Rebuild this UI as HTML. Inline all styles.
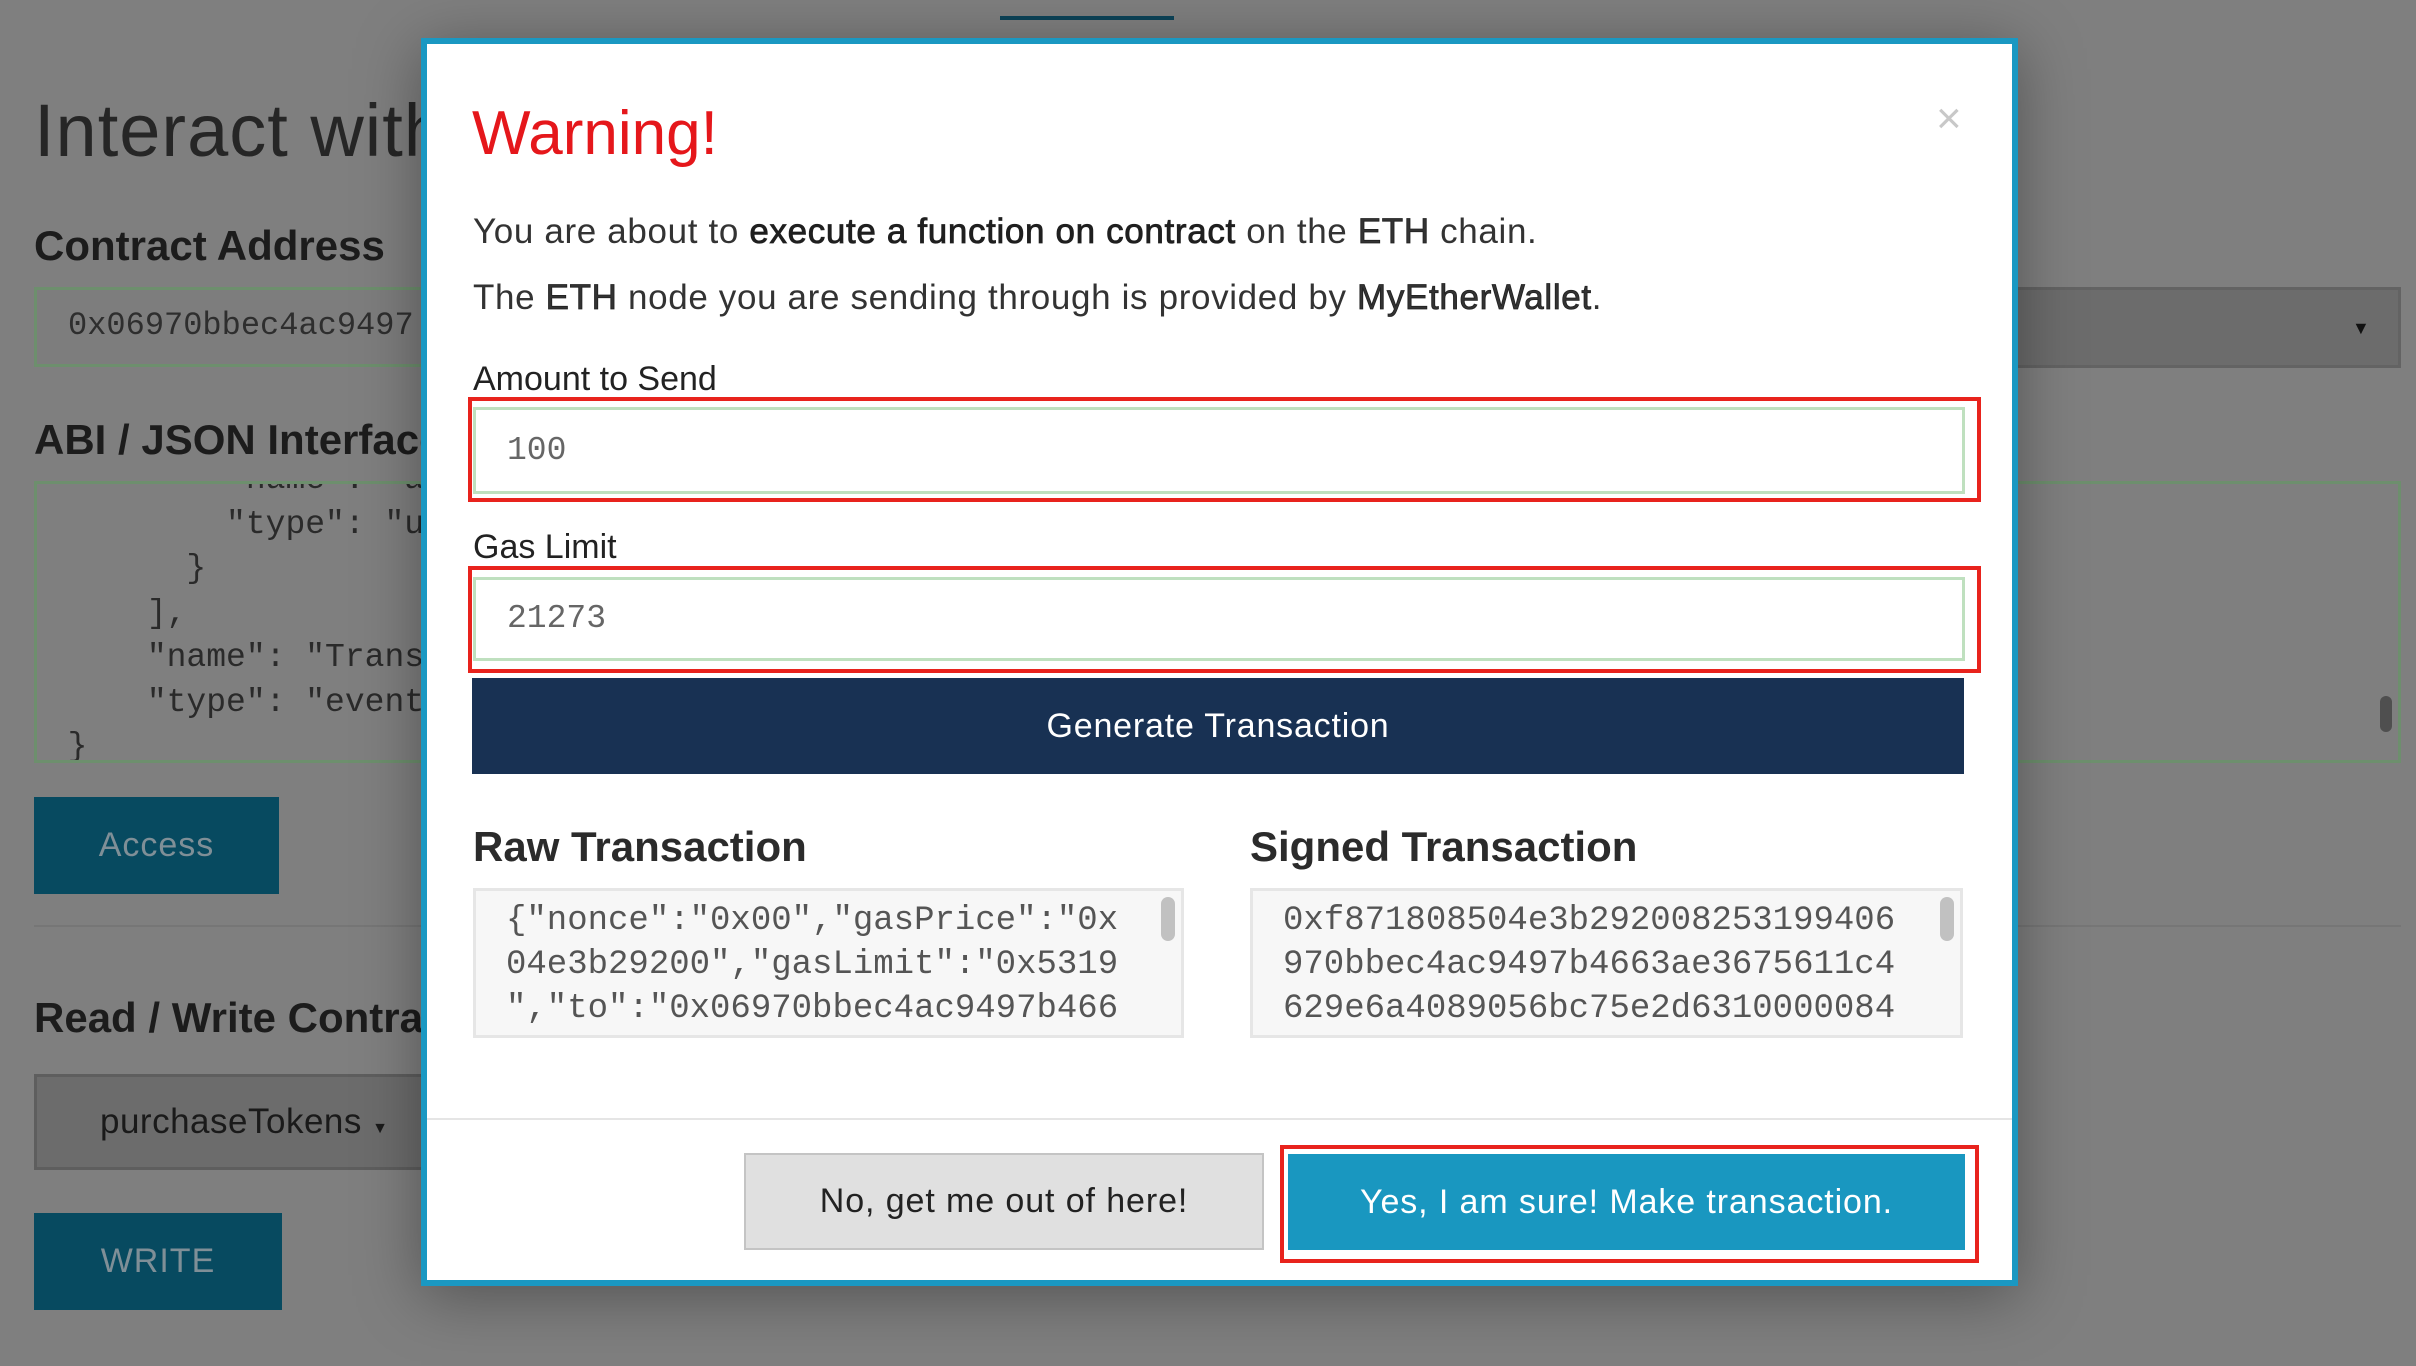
<!DOCTYPE html>
<html><head><meta charset="utf-8"><style>
*{margin:0;padding:0;box-sizing:border-box}
body{width:2416px;height:1366px;overflow:hidden;background:#7f7f7f;font-family:"Liberation Sans",sans-serif;position:relative;color:#1e1e1e}
.a{position:absolute;white-space:nowrap}
.mono{font-family:"Liberation Mono",monospace}
.h{font-weight:bold;font-size:42px;color:#1c1c1c;letter-spacing:0}
.lbl{font-size:34px;color:#222;letter-spacing:0}
.in{position:absolute;border:3px solid #bfe0bf;background:#fff}
.red{position:absolute;border:4px solid #e8231d}
.ta{position:absolute;background:#f7f7f7;border:3px solid #e6e6e6;overflow:hidden}
.ta div{font-family:"Liberation Mono",monospace;font-size:34px;color:#555;line-height:44px;padding:8px 0 0 30px;white-space:pre}
</style></head><body>
<!-- background page -->
<div class="a" style="left:1000px;top:16px;width:174px;height:4px;background:#0c4358"></div>
<div class="a" style="left:34px;top:88px;font-size:74px;color:#262626;letter-spacing:1px">Interact with</div>
<div class="a h" style="left:34px;top:222px">Contract Address</div>
<div class="a" style="left:34px;top:287px;width:420px;height:80px;border:3px solid #6d8f6d;background:#7d7d7d"></div>
<div class="a mono" style="left:68px;top:307px;font-size:32px;color:#2e2e2e">0x06970bbec4ac9497</div>
<div class="a" style="left:2000px;top:287px;width:401px;height:81px;border:3px solid #636363;background:#6c6c6c"></div>
<div class="a" style="left:2352px;top:318px;font-size:18px;color:#111">▼</div>
<div class="a h" style="left:34px;top:416px">ABI / JSON Interface</div>
<div class="a" style="left:34px;top:481px;width:2367px;height:282px;border:3px solid #6d8f6d;background:#7f7f7f;overflow:hidden">
<div class="mono" style="position:absolute;left:-9px;top:-26px;font-size:33px;color:#2a2a2a;line-height:44.5px;white-space:pre">          "name": "a
          "type": "u
        }
      ],
      "name": "Trans
      "type": "event
  }</div></div>
<div class="a" style="left:2380px;top:696px;width:12px;height:36px;background:#4f4f4f;border-radius:6px"></div>
<div class="a" style="left:34px;top:797px;width:245px;height:97px;background:#074a60;color:#7f8f97;font-size:34px;text-align:center;line-height:97px;letter-spacing:1px">Access</div>
<div class="a" style="left:34px;top:925px;width:2367px;height:2px;background:#767676"></div>
<div class="a h" style="left:34px;top:994px">Read / Write Contract</div>
<div class="a" style="left:34px;top:1074px;width:400px;height:96px;border:3px solid #5e5e5e;background:#6c6c6c"></div>
<div class="a" style="left:100px;top:1102px;font-size:35px;color:#1a1a1a;letter-spacing:0.5px">purchaseTokens <span style="font-size:16px">▼</span></div>
<div class="a" style="left:34px;top:1213px;width:248px;height:97px;background:#074a60;color:#7f8f97;font-size:34px;text-align:center;line-height:97px;letter-spacing:1px">WRITE</div>

<!-- modal -->
<div class="a" style="left:421px;top:38px;width:1597px;height:1248px;background:#fff;border:6px solid #1a98c2;box-shadow:0 10px 60px rgba(0,0,0,.35)"></div>
<div class="a" style="left:472px;top:98px;font-size:62px;color:#e5171b;letter-spacing:0">Warning!</div>
<div class="a" style="left:1936px;top:94px;font-size:44px;color:#c8c8c8">×</div>
<div class="a" style="left:473px;top:212px;font-size:35px;color:#333;letter-spacing:0.65px">You are about to <span style="color:#1f1f1f;-webkit-text-stroke:0.8px #1f1f1f">execute a function on contract</span> on the <span style="-webkit-text-stroke:0.8px #1f1f1f">ETH</span> chain.</div>
<div class="a" style="left:473px;top:278px;font-size:35px;color:#333;letter-spacing:0.65px">The <span style="-webkit-text-stroke:0.8px #1f1f1f">ETH</span> node you are sending through is provided by <span style="-webkit-text-stroke:0.8px #1f1f1f">MyEtherWallet</span>.</div>
<div class="a lbl" style="left:473px;top:360px">Amount to Send</div>
<div class="red" style="left:468px;top:397px;width:1513px;height:105px"></div>
<div class="in" style="left:473px;top:407px;width:1492px;height:87px"></div>
<div class="a mono" style="left:507px;top:432px;font-size:33px;color:#666">100</div>
<div class="a lbl" style="left:473px;top:528px">Gas Limit</div>
<div class="red" style="left:468px;top:566px;width:1513px;height:107px"></div>
<div class="in" style="left:473px;top:577px;width:1492px;height:84px"></div>
<div class="a mono" style="left:507px;top:600px;font-size:33px;color:#666">21273</div>
<div class="a" style="left:472px;top:678px;width:1492px;height:96px;background:#183153;color:#fff;font-size:34px;text-align:center;line-height:96px;letter-spacing:0.8px">Generate Transaction</div>
<div class="a h" style="left:473px;top:823px;color:#2b2b2b">Raw Transaction</div>
<div class="a h" style="left:1250px;top:823px;color:#2b2b2b">Signed Transaction</div>
<div class="ta" style="left:473px;top:888px;width:711px;height:150px"><div>{"nonce":"0x00","gasPrice":"0x
04e3b29200","gasLimit":"0x5319
","to":"0x06970bbec4ac9497b466
3ae3675611c4629e6a","value":"0</div></div>
<div class="a" style="left:1161px;top:897px;width:14px;height:44px;background:#c1c1c1;border-radius:7px"></div>
<div class="ta" style="left:1250px;top:888px;width:713px;height:150px"><div>0xf871808504e3b292008253199406
970bbec4ac9497b4663ae3675611c4
629e6a4089056bc75e2d6310000084
3610c3b1000000000000000000000</div></div>
<div class="a" style="left:1940px;top:897px;width:14px;height:44px;background:#c1c1c1;border-radius:7px"></div>
<div class="a" style="left:427px;top:1118px;width:1585px;height:2px;background:#e5e5e5"></div>
<div class="a" style="left:744px;top:1153px;width:520px;height:97px;background:#e0e0e0;border:2px solid #c4c4c4;color:#222;font-size:34px;text-align:center;line-height:93px;letter-spacing:0.9px">No, get me out of here!</div>
<div class="red" style="left:1280px;top:1145px;width:699px;height:118px"></div>
<div class="a" style="left:1288px;top:1154px;width:677px;height:96px;background:#1997c0;color:#fff;font-size:34px;text-align:center;line-height:96px;letter-spacing:0.9px">Yes, I am sure! Make transaction.</div>
</body></html>
